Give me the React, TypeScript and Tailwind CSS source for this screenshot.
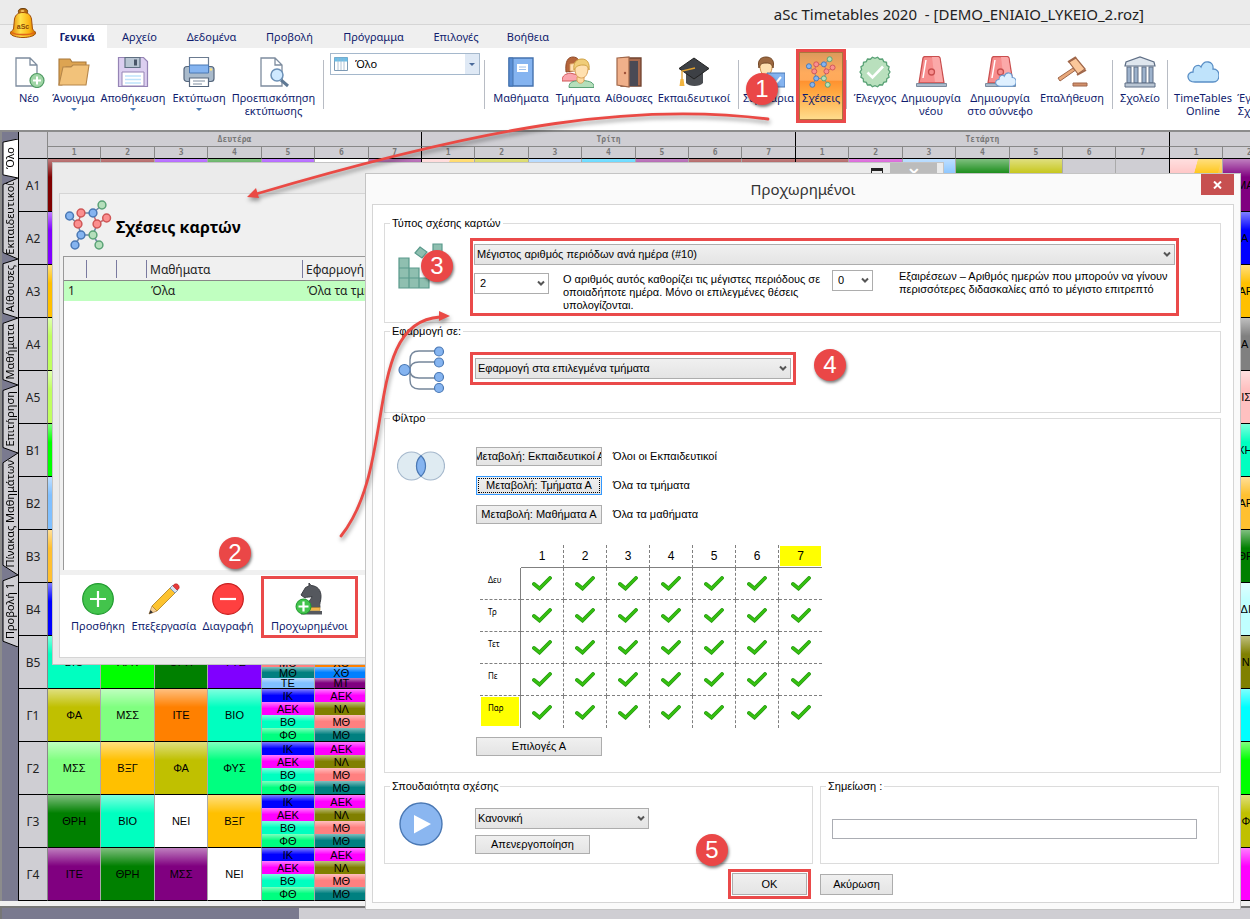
import React from "react";

type IconProps = { className?: string };

/* ---------- icons ---------- */

const moleculeLinks = [
  [28, 13, 37, 5], [4, 16, 13, 24], [16, 13, 28, 13], [16, 13, 13, 24], [28, 13, 32, 24],
  [32, 24, 42, 18], [13, 24, 16, 35], [32, 24, 28, 35], [16, 35, 28, 35], [16, 35, 10, 45], [28, 35, 34, 45],
];
const moleculeAtoms: [number, number, string, string][] = [
  [37, 5, "#b5dfbb", "#5aa276"], [4.6, 16, "#85b4f0", "#4a78b4"], [16, 13, "#fb8f8f", "#cf5757"],
  [28, 13, "#85b4f0", "#4a78b4"], [41.6, 18, "#fb8f8f", "#cf5757"], [13, 24, "#fb8f8f", "#cf5757"],
  [32, 24, "#fb8f8f", "#cf5757"], [16, 35, "#85b4f0", "#4a78b4"], [28, 35, "#b5dfbb", "#5aa276"],
  [10, 45, "#85b4f0", "#4a78b4"], [34, 45, "#b5dfbb", "#5aa276"],
];

const Molecule = ({ className }: IconProps) => (
  <svg viewBox="0 0 47 50" className={className} fill="none">
    {moleculeLinks.map(([a, b, c, d], i) => (
      <line key={i} x1={a} y1={b} x2={c} y2={d} stroke={i === 3 || i === 4 || i === 5 ? "#c46a70" : "#6d86a6"} strokeWidth="1.5" />
    ))}
    {moleculeAtoms.map(([x, y, f, s], i) => (
      <circle key={i} cx={x} cy={y} r="3.9" fill={f} stroke={s} strokeWidth="1.5" />
    ))}
  </svg>
);

const Bell = ({ className }: IconProps) => (
  <svg viewBox="0 0 26 30" className={className}>
    <defs>
      <linearGradient id="bell" x1="0" x2="1">
        <stop offset="0" stopColor="#e07a00" />
        <stop offset=".4" stopColor="#ffe24a" />
        <stop offset=".75" stopColor="#fdb515" />
        <stop offset="1" stopColor="#c96a00" />
      </linearGradient>
    </defs>
    <ellipse cx="13" cy="3.500" rx="4.600" ry="3" fill="#b56a10" stroke="#6b3c08" />
    <ellipse cx="12.500" cy="3" rx="2" ry="1" fill="#f5c060" />
    <path d="M4.500 11C5.500 6 9 4.500 13 4.500s7.500 1.500 8.500 6.500l1 10c1 2 3 2 3 4 0 3-7 4.500-12.500 4.500S.5 28 .5 25c0-2 2-2 3-4z" fill="url(#bell)" stroke="#a34f08" />
    <path d="M2 24.500c3 2.800 19 2.800 22 0" fill="none" stroke="#e0661a" strokeWidth="1.600" />
    <text x="13" y="21" fontSize="7" fontWeight="bold" textAnchor="middle" fill="#8a4a08" fontFamily="Liberation Sans, sans-serif">aSc</text>
  </svg>
);

const PageShape = () => <path d="M3 2h14l7 7v21H3z M17 2v7h7" fill="#fff" stroke="#7d8c9e" strokeWidth="1.300" />;

const NewIcon = ({ className }: IconProps) => (
  <svg viewBox="0 0 32 32" className={className}>
    <PageShape />
    <circle cx="24" cy="24.500" r="7" fill="#9fd5a5" stroke="#4f9a63" strokeWidth="1.200" />
    <path d="M24 20.500v8M20 24.500h8" stroke="#fff" strokeWidth="2" />
  </svg>
);
const OpenIcon = ({ className }: IconProps) => (
  <svg viewBox="0 0 32 32" className={className}>
    <path d="M1 29V3h11l2 3h14v5H8L4 29z" fill="#dda452" stroke="#a9783a" strokeWidth="1.100" />
    <path d="M5 11h8l2-2h16l-3 20H1z" fill="#f2c27a" stroke="#b5864a" strokeWidth="1.100" />
  </svg>
);
const SaveIcon = ({ className }: IconProps) => (
  <svg viewBox="0 0 32 32" className={className}>
    <path d="M1.500 1.500h25l4 4v25h-29z" fill="#dccff0" stroke="#9584b5" strokeWidth="1.200" />
    <path d="M8 1.500h15v10H8z" fill="#b9c5d3" stroke="#5f6f82" strokeWidth="1.200" />
    <path d="M17 3.500h3v6h-3z" fill="#4a5668" />
    <path d="M5 16h22v14H5z" fill="#fff" stroke="#9584b5" />
    <path d="M8 20h16M8 23.500h16M8 27h16" stroke="#bfe3fb" strokeWidth="1.500" />
  </svg>
);
const PrintIcon = ({ className }: IconProps) => (
  <svg viewBox="0 0 32 32" className={className}>
    <path d="M6.500 1.500h19v10h-19z" fill="#fff" stroke="#6b7b90" strokeWidth="1.200" />
    <rect x="1" y="10.500" width="30" height="15" rx="3" fill="#a9bacb" stroke="#56677d" strokeWidth="1.200" />
    <path d="M6.500 9h19v8h-19z" fill="#85b4f0" stroke="#4a78b4" />
    <path d="M6.500 22h19v8.500h-19z" fill="#fff" stroke="#56677d" strokeWidth="1.200" />
    <path d="M10 25h12M10 28h9" stroke="#7d8c9e" />
    <circle cx="28" cy="13.500" r="1.200" fill="#ffe27a" />
  </svg>
);
const PreviewIcon = ({ className }: IconProps) => (
  <svg viewBox="0 0 32 32" className={className}>
    <PageShape />
    <path d="M23 24l7 6" stroke="#5f7994" strokeWidth="3" />
    <circle cx="19" cy="19" r="6" fill="#cfe9ff" stroke="#6b8fb5" strokeWidth="1.500" />
  </svg>
);
const BookIcon = ({ className }: IconProps) => (
  <svg viewBox="0 0 32 32" className={className}>
    <path d="M4 2h24v28H4z" fill="#85b4f0" stroke="#4472ae" strokeWidth="1.400" />
    <path d="M4 2h4v28H4z" fill="#5a8fd6" stroke="#4472ae" />
    <path d="M12 8h11v8H12z" fill="#fff" />
    <path d="M14 11h7M14 13.500h7" stroke="#9fc0ea" />
  </svg>
);
const PeopleIcon = ({ className }: IconProps) => (
  <svg viewBox="0 0 32 32" className={className}>
    <path d="M4 16C3 5 6 1 11 1s8 4 7 13z" fill="#b5653a" stroke="#8f4a28" />
    <path d="M8 8c3 0 6-1 7-3v10H8z" fill="#ffe0b5" stroke="#d9a05a" strokeWidth=".800" />
    <path d="M0 25c0-6 4-7 8-8l8 2v6z" fill="#fba5ad" stroke="#cf5757" />
    <path d="M7 31.500c0-6 4-6 9-7h6c5 1 10 1 10 7z" fill="#b5dfbb" stroke="#5aa276" />
    <path d="M15 21h7v4c-2 3-5 3-7 0z" fill="#ffd9a0" stroke="#d9a05a" />
    <path d="M13 13c0-6 2-9 7-9 4 0 7 3 6 9-.500 6-3 9-6.500 9S13 19 13 13z" fill="#ffe0b0" stroke="#d9a05a" />
    <path d="M12 14c-1-7 2-11 8-11 5 0 8 4 7 11-1-4-3-5-6-5-4 0-7 1-9 5z" fill="#f0cd78" stroke="#cfa245" />
  </svg>
);
const DoorIcon = ({ className }: IconProps) => (
  <svg viewBox="0 0 32 32" className={className}>
    <path d="M8 2h20v28H8z" fill="#a86a4f" stroke="#70432f" strokeWidth="1.300" />
    <path d="M14 5h11v25H14z" fill="#4a4a55" />
    <path d="M4 2l12-1v30L4 29z" fill="#f0b08a" stroke="#a0674a" strokeWidth="1.200" />
    <circle cx="12" cy="17" r="1.200" fill="#a0523a" />
  </svg>
);
const CapIcon = ({ className }: IconProps) => (
  <svg viewBox="0 0 32 32" className={className}>
    <path d="M8 16v11c3 4 14 4 17 0V16z" fill="#4a4d52" />
    <path d="M16 2l15 10.500L16 23 1 12.500z" fill="#3d4045" stroke="#222" />
    <path d="M17 12L4 15v10" fill="none" stroke="#e0a030" strokeWidth="1.300" />
    <path d="M2.500 23h3l1 7h-5z" fill="#f2b540" />
  </svg>
);
const SeminarIcon = ({ className }: IconProps) => (
  <svg viewBox="0 0 32 32" className={className}>
    <path d="M1 31c0-8 4-9 9-10h6c4 1 8 2 8 10z" fill="#b5dfbb" stroke="#5aa276" />
    <path d="M7 10c0-5 2-8 6-8s7 3 6 9c0 5-3 9-6 9s-6-4-6-10z" fill="#ffe0b0" stroke="#c98f4a" />
    <path d="M6 12C4 4 8 1 13 1s9 3 7 11c-1-4-3-5-7-5s-6 1-7 5z" fill="#9c6840" stroke="#744826" />
    <path d="M14 17h18v14H14z" fill="#85b4f0" stroke="#4a78b4" />
    <path d="M20 24l3 3 5-6" fill="none" stroke="#fff" strokeWidth="2" />
  </svg>
);
const SealIcon = ({ className }: IconProps) => {
  const pts = Array.from({ length: 36 }, (_, i) => {
    const r = i % 2 ? 13.6 : 15;
    const a = (i * Math.PI) / 18;
    return `${16 + r * Math.cos(a)},${16 + r * Math.sin(a)}`;
  }).join(" ");
  return (
    <svg viewBox="0 0 32 32" className={className}>
      <polygon points={pts} fill="#b9e0bd" stroke="#5aa276" strokeWidth="1.300" />
      <path d="M8.500 16.500l5 5L24 10.500" fill="none" stroke="#fff" strokeWidth="2.600" />
    </svg>
  );
};
const SirenBody = () => (
  <>
    <path d="M8 2q.500-1.500 2-1.500h13q1.500 0 2 1.500l4 25H4z" fill="#f78e8e" stroke="#c94f4f" strokeWidth="1.300" />
    <path d="M17 1h6q1 0 1.500 1.500L28 26h-8z" fill="#fba9a9" />
    <path d="M11 4l-3 18" stroke="#fff" strokeWidth="1.500" />
    <circle cx="16.500" cy="16" r="3" fill="none" stroke="#c94f4f" strokeWidth="1.300" />
    <path d="M1.500 27.500h30v3h-30z" fill="#a9bacb" stroke="#7d8c9e" />
  </>
);
const SirenIcon = ({ className }: IconProps) => (
  <svg viewBox="0 0 32 32" className={className}><SirenBody /></svg>
);
const cloudPath = "M8 26c-9 0-9-10-2-10C6 9 12 8 14 11c3-8 13-6 12 2 8 0 8 13 0 13z";
const SirenCloudIcon = ({ className }: IconProps) => (
  <svg viewBox="0 0 32 32" className={className}>
    <SirenBody />
    <g transform="translate(11 13) scale(.66)"><path d={cloudPath} fill="#dff0ff" stroke="#6b9bd0" strokeWidth="1.600" /></g>
  </svg>
);
const CloudIcon = ({ className }: IconProps) => (
  <svg viewBox="0 0 32 32" className={className}><path d={cloudPath} fill="#bfe3fb" stroke="#5a8fc6" strokeWidth="1.300" /></svg>
);
const GavelIcon = ({ className }: IconProps) => (
  <svg viewBox="0 0 32 32" className={className}>
    <path d="M2 22L17 12l2 2.500L4 25z" fill="#e8a87a" stroke="#a0674a" />
    <path d="M13 6l7-4 9 11-7 5z" fill="#fbc79a" stroke="#a0674a" strokeWidth="1.200" />
    <path d="M12 6l8-5M21 19l9-5" stroke="#a0674a" strokeWidth="2" />
    <path d="M17 27h14v3H17z" fill="#d18f6a" stroke="#a0674a" />
  </svg>
);
const BankIcon = ({ className }: IconProps) => (
  <svg viewBox="0 0 32 32" className={className}>
    <path d="M1 10l1-4 14-5 14 5 1 4z" fill="#dfe6ee" stroke="#5f6f86" strokeWidth="1.200" />
    {[3, 10, 18, 25].map((x) => (
      <rect key={x} x={x} y="11" width="4" height="16" fill="#9db2cc" stroke="#5f6f86" />
    ))}
    <path d="M1 27h30v4H1z" fill="#b9c5d3" stroke="#5f6f86" />
  </svg>
);
const AddIcon = ({ className }: IconProps) => (
  <svg viewBox="0 0 32 32" className={className}>
    <circle cx="16" cy="16" r="15.300" fill="#43c44c" stroke="#1f9a2e" strokeWidth="1.200" />
    <path d="M16 8v16M8 16h16" stroke="#fff" strokeWidth="2.200" />
  </svg>
);
const RemoveIcon = ({ className }: IconProps) => (
  <svg viewBox="0 0 32 32" className={className}>
    <circle cx="16" cy="16" r="15.300" fill="#ff4040" stroke="#c81e1e" strokeWidth="1.200" />
    <path d="M8 16h16" stroke="#fff" strokeWidth="2.200" />
  </svg>
);
const PencilIcon = ({ className }: IconProps) => (
  <svg viewBox="0 0 32 32" className={className}>
    <path d="M1 31l3-8 5 5z" fill="#f5cf95" stroke="#b5864a" strokeWidth=".800" />
    <path d="M1 31l1.500-4 2.500 2.500z" fill="#333" />
    <path d="M4 23L22 5l5 5L9 28z" fill="#fdc32f" stroke="#b58a2a" strokeWidth=".900" />
    <path d="M22 5l3-3 5 5-3 3z" fill="#d5e3f0" stroke="#7890aa" strokeWidth=".900" />
    <path d="M26 1.500c3-2 6 1 5 4l-2 1.500-4-4z" fill="#e83a3a" stroke="#b02020" strokeWidth=".600" />
  </svg>
);
const KnightIcon = ({ className }: IconProps) => (
  <svg viewBox="0 0 32 32" className={className}>
    <path d="M15 0l2 2.500c7 .5 10 5 10 11 0 5-2 7-1 11H12c0-5 5-7 6-11-3 1-5 0-7 1.500l-4-3 4.500-7.500L15 3z" fill="#55585e" stroke="#3a3d42" />
    <path d="M11 24.500h15v3H11z" fill="#f5b54a" stroke="#b58a2a" strokeWidth=".600" />
    <path d="M7 28h21v3.500H7z" fill="#55585e" />
    <circle cx="9.500" cy="23.500" r="7.500" fill="#43c44c" stroke="#1f9a2e" />
    <path d="M9.500 18.500v10M4.500 23.500h10" stroke="#fff" strokeWidth="2.200" />
  </svg>
);
const BlocksIcon = ({ className }: IconProps) => (
  <svg viewBox="0 0 48 48" className={className} fill="#8fbfb0" stroke="#5a9a8c" strokeWidth="1.200">
    <path d="M1 15h10v10H1zM1 25h10v10H1zM11 25h10v10H11zM1 35h10v10H1zM11 35h10v10H11zM21 35h10v10H21zM35 1h9v9h-9z" />
    <path d="M22 4l7 5-5 6-7-5z" />
  </svg>
);
const TreeIcon = ({ className }: IconProps) => (
  <svg viewBox="0 0 48 48" className={className} fill="none" stroke="#75869b" strokeWidth="1.400">
    <path d="M41 5H21q-9 0-9 9v20q0 9 9 9h20M41 16H21q-9 0-9 8 0 8 9 8h20" />
    <g fill="#85b4f0" stroke="#4a78b4" strokeWidth="1.200">
      <circle cx="6.500" cy="24" r="5.500" />
      <circle cx="41" cy="5.500" r="4.500" /><circle cx="41" cy="16.500" r="4.500" />
      <circle cx="41" cy="31" r="4.500" /><circle cx="41" cy="42" r="4.500" />
    </g>
  </svg>
);
const VennIcon = ({ className }: IconProps) => (
  <svg viewBox="0 0 48 30" className={className} strokeWidth="1.200">
    <circle cx="14.500" cy="15" r="14" fill="#dfebf2" stroke="#a5b8cc" />
    <circle cx="33.500" cy="15" r="14" fill="#dfebf2" stroke="#a5b8cc" />
    <path d="M24 4.700a14 14 0 0 1 0 20.600a14 14 0 0 1 0-20.600z" fill="#85b4f0" stroke="#4a78b4" />
  </svg>
);
const PlayIcon = ({ className }: IconProps) => (
  <svg viewBox="0 0 44 44" className={className}>
    <circle cx="22" cy="22" r="21" fill="#8ab6f0" stroke="#4a78b4" strokeWidth="1.400" />
    <path d="M15 13l17 9-17 9.500z" fill="#fff" />
  </svg>
);
const Tick = () => (
  <svg viewBox="0 0 20 15" className="mx-auto h-[15px] w-5">
    <path d="M2 8l5.500 4.500L18 2" fill="none" stroke="#249a10" strokeWidth="3.800" strokeLinecap="round" />
    <path d="M2 8l5.500 4.500L18 2" fill="none" stroke="#36c010" strokeWidth="2.400" strokeLinecap="round" />
  </svg>
);

/* ---------- ribbon ---------- */

const Sep = ({ className = "" }: IconProps) => <span className={`mt-3 h-[49px] w-px shrink-0 bg-[#b8bcc4] ${className}`} />;

type RibbonProps = { icon?: (p: IconProps) => React.ReactElement; lines: string[]; w: string; drop?: boolean; active?: boolean };

const RibbonButton = ({ icon: Icon, lines, w, drop, active }: RibbonProps) => (
  <button
    className={`flex shrink-0 flex-col items-center text-[11px] leading-[13px] whitespace-nowrap text-[#0f1c6e] ${w} ${
      active
        ? "h-[68px] border border-[#a8783c] bg-[linear-gradient(#dc9a5c,#ffab5c_30%,#ffa95a_41%,#ff9230_43%,#ffa840_60%,#ffdc8c)] pt-[3px]"
        : "h-[82px] pt-[8px]"
    }`}
  >
    {Icon ? <Icon className="h-8 w-8 shrink-0" /> : <span className="h-8" />}
    <span className="mt-[3px] text-center">
      {lines.map((l) => (
        <span key={l} className="block">{l}</span>
      ))}
    </span>
    {drop && <span className="mt-[4px] border-x-[3px] border-t-[3px] border-x-transparent border-t-[#4a7ab5]" />}
  </button>
);

const menuTabs: [string, string][] = [
  ["Αρχείο", "w-[65px]"], ["Δεδομένα", "w-[79px]"], ["Προβολή", "w-[77px]"],
  ["Πρόγραμμα", "w-[91px]"], ["Επιλογές", "w-[74px]"], ["Βοήθεια", "w-[70px]"],
];

const Ribbon = () => (
  <div className="flex h-[82px] items-start overflow-hidden bg-white pl-[9px]">
    <RibbonButton icon={NewIcon} lines={["Νέο"]} w="w-10" />
    <RibbonButton icon={OpenIcon} lines={["Άνοιγμα"]} w="w-[49px]" drop />
    <RibbonButton icon={SaveIcon} lines={["Αποθήκευση"]} w="w-[70px]" drop />
    <RibbonButton icon={PrintIcon} lines={["Εκτύπωση"]} w="w-[62px]" drop />
    <RibbonButton icon={PreviewIcon} lines={["Προεπισκόπηση", "εκτύπωσης"]} w="w-[87px]" />
    <Sep className="mx-[6px]" />
    <div className="relative mt-[5px] w-[150px] shrink-0">
      <svg viewBox="0 0 14 14" className="absolute top-1 left-1 h-3.5 w-3.5">
        <path d="M.5.5h13v13H.5z" fill="#fff" stroke="#7d9ab5" />
        <path d="M.5.5h13v4H.5z" fill="#6bbfe8" />
        <path d="M4 1v12M7 1v12M10 1v12" stroke="#9fb5cc" strokeWidth=".800" />
      </svg>
      <select aria-label="Προβολή" className="block h-[22px] w-full appearance-none border border-[#a5b8cc] bg-transparent pl-6 text-[11px]">
        <option>Όλο</option>
      </select>
      <span className="pointer-events-none absolute top-px right-px flex h-5 w-[14px] items-center justify-center bg-[#dfe9f5]">
        <span className="border-x-[3px] border-t-[3px] border-x-transparent border-t-[#4a6a9a]" />
      </span>
    </div>
    <Sep className="mr-[7px] ml-1" />
    <RibbonButton icon={BookIcon} lines={["Μαθήματα"]} w="w-[58px]" />
    <RibbonButton icon={PeopleIcon} lines={["Τμήματα"]} w="w-14" />
    <RibbonButton icon={DoorIcon} lines={["Αίθουσες"]} w="w-[46px]" />
    <RibbonButton icon={CapIcon} lines={["Εκπαιδευτικοί"]} w="w-[84px]" />
    <Sep className="mx-[2px]" />
    <RibbonButton icon={SeminarIcon} lines={["Σεμινάρια"]} w="w-[55px]" />
    <div className="mt-px h-[74px] shrink-0 border-[3px] border-[#ea4a4a]">
      <RibbonButton icon={Molecule} lines={["Σχέσεις"]} w="w-11" active />
    </div>
    <Sep className="mr-[2px]" />
    <RibbonButton icon={SealIcon} lines={["Έλεγχος"]} w="w-[52px]" />
    <RibbonButton icon={SirenIcon} lines={["Δημιουργία", "νέου"]} w="w-[60px]" />
    <RibbonButton icon={SirenCloudIcon} lines={["Δημιουργία", "στο σύννεφο"]} w="w-[78px]" />
    <RibbonButton icon={GavelIcon} lines={["Επαλήθευση"]} w="w-[66px]" />
    <Sep className="mr-px ml-[7px]" />
    <RibbonButton icon={BankIcon} lines={["Σχολείο"]} w="w-[52px]" />
    <Sep className="ml-px" />
    <RibbonButton icon={CloudIcon} lines={["TimeTables", "Online"]} w="w-[70px]" />
    <RibbonButton lines={["Έγγραφα", "Σχολείου"]} w="w-[46px]" />
  </div>
);

/* ---------- timetable ---------- */

type Card = { t?: string; c: string };
type Slot = Card | Card[];

const maroon = "bg-[#800000]", violet = "bg-[#8000ff]", amber = "bg-[#ffc000]", lime = "bg-[#c0ff60]";
const green = "bg-[#00ff00]", sky = "bg-[#80c0ff]", blue = "bg-[#0000ff]", aqua = "bg-[#00ffc0]";
const forest = "bg-[#008000]", purple = "bg-[#800080]", mustard = "bg-[#c0c000]", mint = "bg-[#80ff80]";
const orange = "bg-[#ff8000]", spring = "bg-[#00ff80]", magenta = "bg-[#ff00ff]", olive = "bg-[#808000]";
const salmon = "bg-[#ff8080]", teal = "bg-[#008080]", white = "bg-white", rose = "bg-[#ffc0c0]", cyan = "bg-[#00ffff]";
const azure = "bg-[#0080ff]", gray = "bg-[#808080]", ice = "bg-[#c0ffff]", gold = "bg-[#ffc030]", orchid = "bg-[#c000c0]";

const groupA: Card[] = [{ t: "ΙΚ", c: blue }, { t: "ΑΕΚ", c: magenta }, { t: "ΒΘ", c: aqua }, { t: "ΦΘ", c: spring }];
const groupB: Card[] = [{ t: "ΑΕΚ", c: magenta }, { t: "ΝΛ", c: olive }, { t: "ΜΘ", c: salmon }, { t: "ΜΘ", c: teal }];

const rows: { name: string; slots: Record<number, Slot> }[] = [
  {
    name: "Α1",
    slots: {
      0: { c: maroon }, 1: { c: maroon }, 2: { c: violet }, 3: { c: forest }, 4: { c: violet }, 5: { c: white }, 6: { c: purple },
      7: { c: "bg-[linear-gradient(105deg,#ffc0c0_42%,#ffc000_43%,#ffc000_78%,#ffc030_79%)]" },
      8: { c: mustard }, 9: { c: sky }, 10: { c: "bg-[#00c0ff]" }, 11: { c: purple }, 12: { c: maroon }, 13: { c: maroon },
      14: { c: maroon }, 15: { c: orchid }, 16: { c: sky }, 17: { c: forest }, 18: { c: mustard },
      21: { c: "bg-[linear-gradient(105deg,#ffc0c0_42%,#ffc000_43%,#ffc000_78%,#ffc030_79%)]" }, 22: { t: "ΜΑΘ", c: purple },
    },
  },
  { name: "Α2", slots: { 0: { c: violet }, 22: { t: "Α Ε", c: blue } } },
  { name: "Α3", slots: { 0: { c: amber }, 22: { t: "ΑΡΧ", c: amber } } },
  { name: "Α4", slots: { 0: { c: lime }, 22: { t: "Α Ε", c: gray } } },
  { name: "Α5", slots: { 0: { c: lime }, 22: { t: "ΙΣΤ", c: rose } } },
  { name: "Β1", slots: { 0: { c: green }, 22: { t: "ΧΗΜ", c: aqua } } },
  { name: "Β2", slots: { 0: { c: sky }, 22: { t: "ΑΡΧ", c: gold } } },
  { name: "Β3", slots: { 0: { c: gold }, 22: { t: "ΘΡΗ", c: forest } } },
  { name: "Β4", slots: { 0: { c: blue }, 22: { t: "ΔΙΕ", c: ice } } },
  {
    name: "Β5",
    slots: {
      0: { t: "ΒΙΟ", c: aqua }, 1: { t: "ΑΓΚ", c: green }, 2: { t: "ΘΡΗ", c: forest }, 3: { t: "ΦΥΣ", c: violet },
      4: [{ c: blue }, { c: magenta }, { t: "ΜΘ", c: salmon }, { t: "ΜΘ", c: teal }, { t: "ΤΕ", c: sky }],
      5: [{ c: blue }, { c: magenta }, { t: "ΧΘ", c: orange }, { t: "ΧΘ", c: azure }, { t: "ΜΤ", c: purple }],
      22: { t: "ΝΛ", c: olive },
    },
  },
  {
    name: "Γ1",
    slots: { 0: { t: "ΦΑ", c: mustard }, 1: { t: "ΜΣΣ", c: mint }, 2: { t: "ΙΤΕ", c: orange }, 3: { t: "ΒΙΟ", c: aqua }, 4: groupA, 5: groupB, 22: { c: cyan } },
  },
  {
    name: "Γ2",
    slots: { 0: { t: "ΜΣΣ", c: mint }, 1: { t: "ΒΞΓ", c: amber }, 2: { t: "ΦΑ", c: mustard }, 3: { t: "ΦΥΣ", c: spring }, 4: groupA, 5: groupB, 22: { c: green } },
  },
  {
    name: "Γ3",
    slots: { 0: { t: "ΘΡΗ", c: forest }, 1: { t: "ΒΙΟ", c: aqua }, 2: { t: "ΝΕΙ", c: white }, 3: { t: "ΒΞΓ", c: amber }, 4: groupA, 5: groupB, 22: { t: "ΦΑ", c: mustard } },
  },
  {
    name: "Γ4",
    slots: { 0: { t: "ΙΤΕ", c: purple }, 1: { t: "ΘΡΗ", c: forest }, 2: { t: "ΜΣΣ", c: purple }, 3: { t: "ΝΕΙ", c: white }, 4: groupA, 5: groupB, 22: { c: magenta } },
  },
];

const CardCell = ({ card, small }: { card: Card; small?: boolean }) => (
  <div className={`min-h-0 flex-1 ${card.c}`}>
    <div
      className={`flex h-full items-center justify-center overflow-hidden bg-linear-to-b from-white/50 to-transparent pt-px text-[11px] ${
        small ? "to-50% leading-[10px]" : "to-35%"
      }`}
    >
      {card.t}
    </div>
  </div>
);

const SlotView = ({ slot }: { slot?: Slot }) => (
  <div className="flex h-[52px] flex-col">
    {Array.isArray(slot)
      ? slot.map((c, i) => <CardCell key={i} card={c} small />)
      : slot && <CardCell card={slot} />}
  </div>
);

const Timetable = () => (
  <table className="w-[1525px] table-fixed border-separate border-spacing-0 bg-[#cfced3] font-['Liberation_Sans',sans-serif]">
    <colgroup>
      <col className="w-[29px]" />
      {Array.from({ length: 28 }, (_, i) => <col key={i} />)}
    </colgroup>
    <thead className="font-['DejaVu_Sans_Mono',monospace] text-[8px] leading-[10px] text-[#777]">
      <tr className="h-[15px]">
        <th rowSpan={2} className="border-r border-b border-r-[#888] border-b-black p-0" />
        {["Δευτέρα", "Τρίτη", "Τετάρτη", "Πέμπτη"].map((d) => (
          <th key={d} colSpan={7} className="border-r border-b border-r-black border-b-[#888] p-0 pt-px">{d}</th>
        ))}
      </tr>
      <tr className="h-3">
        {Array.from({ length: 28 }, (_, i) => (
          <th key={i} className={`border-r border-b border-b-black p-0 ${i % 7 === 6 ? "border-r-black" : "border-r-[#888]"}`}>
            {(i % 7) + 1}
          </th>
        ))}
      </tr>
    </thead>
    <tbody>
      {rows.map((r) => (
        <tr key={r.name}>
          <th className="border-r border-b border-r-[#888] border-b-black p-0 pt-px font-['Noto_Sans',sans-serif] text-xs font-normal text-[#222]">
            {r.name}
          </th>
          {Array.from({ length: 28 }, (_, i) => (
            <td key={i} className={`border-r border-b border-b-black p-0 ${i % 7 === 6 ? "border-r-black" : "border-r-[#aaa]"}`}>
              <SlotView slot={r.slots[i]} />
            </td>
          ))}
        </tr>
      ))}
    </tbody>
  </table>
);

const sideTabs: [string, string][] = [
  ["Όλο", "h-[39px]"], ["Εκπαιδευτικοί", "h-[81px]"], ["Αίθουσες", "h-[59px]"], ["Μαθήματα", "h-[67px]"],
  ["Επιτήρηση", "h-[68px]"], ["Πίνακας Μαθημάτων", "h-[122px]"], ["Προβολή 1", "h-[72px]"],
];

const SideTabs = () => (
  <nav className="flex w-4 shrink-0 flex-col bg-[#7a7a8f] pt-[7px]">
    {sideTabs.map(([name, h], i) => (
      <button key={name} className={`relative flex w-4 items-center justify-center ${h}`}>
        <svg viewBox="0 0 16 100" preserveAspectRatio="none" className="absolute inset-0 h-full w-full">
          <path d="M16 0L1 8V92L16 100" fill={i === 0 ? "#fff" : "#cfced3"} stroke="#000" vectorEffect="non-scaling-stroke" />
        </svg>
        <span className="relative rotate-180 text-[11px] leading-4 whitespace-nowrap [writing-mode:vertical-rl]">{name}</span>
      </button>
    ))}
  </nav>
);

/* ---------- form parts ---------- */

const Drop = ({ label, value, className, plain }: { label: string; value: string; className: string; plain?: boolean }) => (
  <div className={`relative h-[21px] shrink-0 ${className}`}>
    <select
      aria-label={label}
      className={`block h-full w-full appearance-none border border-[#adadad] ${
        plain ? "bg-white pl-[5px]" : "bg-linear-to-b from-[#f0f0f0] to-[#e4e4e4] pl-[2px]"
      }`}
    >
      <option>{value}</option>
    </select>
    <svg viewBox="0 0 8 7" className="pointer-events-none absolute top-[7px] right-1 h-[7px] w-2">
      <path d="M1 1.500l3 3 3-3" fill="none" stroke="#555" strokeWidth="2" />
    </svg>
  </div>
);

const PushButton = ({ children, className = "" }: { children: React.ReactNode; className?: string }) => (
  <button
    className={`flex items-center justify-center overflow-hidden border bg-linear-to-b from-[#f0f0f0] to-[#e4e4e4] whitespace-nowrap ${
      className.includes("outline") ? "" : "border-[#adadad]"
    } ${className}`}
  >
    {children}
  </button>
);

const Group = ({ title, className = "", children }: { title: string; className?: string; children: React.ReactNode }) => (
  <fieldset className={`min-w-0 border border-[#dcdcdc] ${className}`}>
    <legend className="ml-[5px] px-[2px] leading-[10px]">{title}</legend>
    {children}
  </fieldset>
);

const days = ["Δευ", "Τρ", "Τετ", "Πε", "Παρ"];

const PeriodGrid = () => (
  <table className="mt-[21px] ml-1 w-[342px] table-fixed border-separate border-spacing-0">
    <colgroup>
      <col className="w-[41px]" />
      {days.concat("", "").map((_, i) => <col key={i} className="w-[43px]" />)}
    </colgroup>
    <thead>
      <tr>
        <th className="h-[23px] p-0" />
        {[1, 2, 3, 4, 5, 6, 7].map((n) => (
          <th
            key={n}
            className={`h-[23px] border-b border-b-[#808080] p-px text-xs font-normal ${
              n < 7 ? "border-r border-dashed border-r-[#808080] [border-bottom-style:solid]" : ""
            }`}
          >
            <div className={n === 7 ? "h-5 bg-[#ffff00] leading-5" : "h-5 leading-5"}>{n}</div>
          </th>
        ))}
      </tr>
    </thead>
    <tbody>
      {days.map((d, r) => (
        <tr key={d}>
          <th
            className={`h-8 border-r border-r-[#808080] p-px text-left align-top font-['Noto_Sans',sans-serif] text-[8px] font-normal ${
              r < 4 ? "border-b border-dashed border-b-[#808080] [border-right-style:solid]" : ""
            }`}
          >
            <div className={`h-[29px] pt-1.5 pl-[7px] leading-[10px] ${r === 4 ? "bg-[#ffff00]" : ""}`}>{d}</div>
          </th>
          {[1, 2, 3, 4, 5, 6, 7].map((n) => (
            <td key={n} className={`h-8 border-dashed border-[#808080] p-0 ${n < 7 ? "border-r" : ""} ${r < 4 ? "border-b" : ""}`}>
              <Tick />
            </td>
          ))}
        </tr>
      ))}
    </tbody>
  </table>
);

/* ---------- windows ---------- */

const ToolButton = ({ icon: Icon, label, w }: { icon: (p: IconProps) => React.ReactElement; label: string; w: string }) => (
  <button className={`flex flex-col items-center text-[11px] leading-4 whitespace-nowrap text-[#0f1c6e] ${w}`}>
    <Icon className="h-8 w-8" />
    <span className="mt-[3px]">{label}</span>
  </button>
);

const RelationsWindow = () => (
  <section className="absolute top-[162px] left-[52px] w-[892px] border border-[#c4c4c4] bg-[#ebebeb] px-[6px] pb-[6px]">
    <header className="relative h-[30px]">
      <h2 className="text-center text-[15px] leading-8">Σχέσεις καρτών</h2>
      <span className="absolute top-[5px] right-[54px] h-3 w-3 border border-t-[3px] border-[#222]" />
      <button aria-label="Κλείσιμο" className="absolute top-0 right-0 h-5 w-[47px] bg-[#bcbcbc] text-sm leading-5 font-bold text-white">✕</button>
    </header>
    <div className="border border-[#d5d5d5] bg-[#f0f0f0]">
      <div className="flex h-[62px] items-center gap-1 pl-[5px]">
        <Molecule className="h-[50px] w-[47px]" />
        <h1 className="mt-1 text-base font-bold">Σχέσεις καρτών</h1>
      </div>
      <div className="ml-[3px] h-[314px] border-t border-l border-[#999] bg-white">
        <table className="w-full table-fixed border-separate border-spacing-0 text-left text-xs text-[#222]">
          <colgroup>
            <col className="w-[23px]" />
            <col className="w-[30px]" />
            <col className="w-[30px]" />
            <col className="w-[156px]" />
            <col />
          </colgroup>
          <thead>
            <tr className="bg-[#f0f0f0]">
              {["", "", "", "Μαθήματα", "Εφαρμογή"].map((t, i) => (
                <th key={i} className="h-6 border-b border-[#888] p-0 font-normal">
                  <div className={`h-[18px] pl-[3px] leading-[19px] ${i < 4 ? "border-r border-[#7a7aa0]" : ""}`}>{t}</div>
                </th>
              ))}
            </tr>
          </thead>
          <tbody>
            <tr className="bg-[#c0ffc0]">
              {["1", "", "", "Όλα", "Όλα τα τμήματα"].map((t, i) => (
                <td key={i} className="h-5 p-0 pl-1 leading-5">{t}</td>
              ))}
            </tr>
          </tbody>
        </table>
      </div>
      <div className="mt-[5px] flex h-[82px] items-start bg-white pt-px pl-[5px]">
        <div className="flex pt-[7px]">
          <ToolButton icon={AddIcon} label="Προσθήκη" w="w-[66px]" />
          <ToolButton icon={PencilIcon} label="Επεξεργασία" w="w-[66px]" />
          <ToolButton icon={RemoveIcon} label="Διαγραφή" w="w-[62px]" />
        </div>
        <div className="ml-[2px] border-[3px] border-[#ea4a4a] pt-1 pb-px">
          <ToolButton icon={KnightIcon} label="Προχωρημένοι" w="w-[91px]" />
        </div>
      </div>
    </div>
  </section>
);

const filters: [string, string, string][] = [
  ["Μεταβολή: Εκπαιδευτικοί Α", "Όλοι οι Εκπαιδευτικοί", ""],
  ["Μεταβολή: Τμήματα Α", "Όλα τα τμήματα", "border-[#3399ff] outline outline-1 outline-dotted outline-black -outline-offset-3"],
  ["Μεταβολή: Μαθήματα Α", "Όλα τα μαθήματα", ""],
];

const AdvancedDialog = () => (
  <section
    role="dialog"
    aria-label="Προχωρημένοι"
    className="absolute top-[173px] right-[9px] left-[365px] border border-[#c4c4c4] bg-[#fafafa] px-[6px] pb-[6px]"
  >
    <header className="relative h-[30px]">
      <h2 className="text-center text-[15px] leading-[30px] text-[#333]">Προχωρημένοι</h2>
      <button aria-label="Κλείσιμο" className="absolute top-0 right-0 flex h-[21px] w-[33px] items-center justify-center bg-[#c75050]">
        <svg viewBox="0 0 9 8" className="h-2 w-[9px]"><path d="M1 .5l7 7M8 .5l-7 7" stroke="#fff" strokeWidth="2" /></svg>
      </button>
    </header>
    <div className="border border-[#d5d5d5] bg-white pt-[13px] pr-3 pb-[3px] pl-[11px] font-['Liberation_Sans',sans-serif] text-[11px] leading-[13px]">
      <Group title="Τύπος σχέσης καρτών" className="h-[105px]">
        <div className="mt-[10px] flex items-start pr-[41px] pl-[13px]">
          <BlocksIcon className="mt-[5px] h-12 w-12 shrink-0" />
          <div className="ml-6 min-w-0 flex-1 border-[3px] border-[#ea4a4a] px-px pt-[3px] pb-px">
            <Drop label="Τύπος σχέσης" value="Μέγιστος αριθμός περιόδων ανά ημέρα (#10)" className="w-full" />
            <div className="mt-[5px] flex h-[42px] items-start">
              <Drop label="Μέγιστος αριθμός" value="2" className="mt-[3px] w-[75px]" plain />
              <p className="mt-[3px] ml-[14px] w-[260px] shrink-0">
                Ο αριθμός αυτός καθορίζει τις μέγιστες περιόδους σε οποιαδήποτε ημέρα. Μόνο οι επιλεγμένες θέσεις υπολογίζονται.
              </p>
              <Drop label="Εξαιρέσεις" value="0" className="ml-[9px] w-[41px]" plain />
              <p className="ml-[26px] min-w-0">
                Εξαιρέσεων – Αριθμός ημερών που μπορούν να γίνουν περισσότερες διδασκαλίες από το μέγιστο επιτρεπτό
              </p>
            </div>
          </div>
        </div>
      </Group>

      <Group title="Εφαρμογή σε:" className="mt-[3px] h-[87px]">
        <div className="mt-[10px] flex items-start pl-[13px]">
          <TreeIcon className="h-12 w-12" />
          <div className="mt-[6px] ml-6 border-[3px] border-[#ea4a4a] px-[2px] py-[3px]">
            <Drop label="Εφαρμογή σε" value="Εφαρμογή στα επιλεγμένα τμήματα" className="w-[316px]" />
          </div>
        </div>
      </Group>

      <Group title="Φίλτρο" className="h-[360px]">
        <div className="mt-6 flex items-start pl-3">
          <VennIcon className="mt-1 h-[30px] w-12" />
          <div className="ml-[31px]">
            <div className="flex flex-col gap-[10px]">
              {filters.map(([b, t, extra]) => (
                <div key={b} className="flex items-center gap-[11px]">
                  <PushButton className={`h-[19px] w-[126px] ${extra}`}>
                    <span>{b}</span>
                  </PushButton>
                  <span>{t}</span>
                </div>
              ))}
            </div>
            <PeriodGrid />
            <PushButton className="mt-[9px] h-[19px] w-[126px]">Επιλογές Α</PushButton>
          </div>
        </div>
      </Group>

      <div className="mt-[8px] flex gap-[7px]">
        <Group title="Σπουδαιότητα σχέσης" className="h-[83px] w-[429px] shrink-0">
          <div className="mt-[11px] flex items-start pl-[14px]">
            <PlayIcon className="h-11 w-11" />
            <div className="mt-[6px] ml-8">
              <Drop label="Σπουδαιότητα σχέσης" value="Κανονική" className="w-[174px]" />
              <PushButton className="mt-[6px] h-[19px] w-[115px]">Απενεργοποίηση</PushButton>
            </div>
          </div>
        </Group>
        <Group title="Σημείωση :" className="mr-[2px] h-[83px] flex-1">
          <input aria-label="Σημείωση" className="mt-[28px] ml-[11px] h-5 w-[calc(100%-32px)] border border-[#abadb3] px-1" />
        </Group>
      </div>

      <div className="mt-[5px] ml-[344px] flex items-center gap-[9px]">
        <div className="border-[3px] border-[#ea4a4a] px-px py-px">
          <PushButton className="h-[22px] w-[75px]">OK</PushButton>
        </div>
        <PushButton className="h-[21px] w-[73px]">Ακύρωση</PushButton>
      </div>
    </div>
  </section>
);

/* ---------- tutorial marks ---------- */

const badges: [number, string][] = [
  [1, "top-[73px] left-[746px]"],
  [2, "top-[537px] left-[219px]"],
  [3, "top-[250px] left-[421px]"],
  [4, "top-[349px] left-[814px]"],
  [5, "top-[834px] left-[696px]"],
];

const Marks = () => (
  <>
    <svg viewBox="0 0 800 560" className="pointer-events-none absolute top-0 left-0 h-[560px] w-[800px] drop-shadow-[1px_3px_2px_rgba(0,0,0,0.4)]">
      <g fill="none" stroke="#ea4a45" strokeWidth="2.800" strokeLinecap="round">
        <path d="M768 119C640 103 500 122 256 194" />
        <path d="M341 536C398 465 362 322 440 317" />
      </g>
      <path d="M247 197l9-9 3 10zM450 316l-11-5v10z" fill="#ea4a45" />
    </svg>
    {badges.map(([n, pos]) => (
      <span
        key={n}
        className={`absolute flex h-8 w-8 items-center justify-center rounded-full bg-[#ea4747] font-['Liberation_Sans',sans-serif] text-2xl leading-8 text-white shadow-[1px_2px_3px_rgba(0,0,0,0.5)] ${pos}`}
      >
        {n}
      </span>
    ))}
  </>
);

export default function App() {
  return (
    <div className="relative flex min-h-screen flex-col overflow-hidden bg-[#cfced3] font-['Noto_Sans',sans-serif] text-black">
      <header>
        <div className="flex h-[25px] items-center justify-end border-b border-[#d5d5d5] bg-[#ebebeb] pr-[106px]">
          <h1 className="mt-1 text-[15px] whitespace-pre text-[#222]">aSc Timetables 2020  - [DEMO_ENIAIO_LYKEIO_2.roz]</h1>
        </div>
        <Bell className="absolute top-2 left-[10px] h-[30px] w-[26px]" />
        <nav className="flex h-[23px] bg-[#efefef] pl-[47px] text-[11px] text-[#0f1c6e]">
          <button className="w-[60px] bg-white pt-[2px] font-bold">Γενικά</button>
          {menuTabs.map(([t, w]) => (
            <button key={t} className={`pt-[2px] ${w}`}>{t}</button>
          ))}
        </nav>
        <Ribbon />
      </header>
      <main className="flex border-t-2 border-l-2 border-[#8c8c8c]">
        <SideTabs />
        <div className="min-w-0 flex-1 overflow-hidden border-l border-black">
          <Timetable />
        </div>
      </main>
      <footer>
        <div className="h-[5px] bg-[#f0f0f0]" />
        <div className="flex h-[14px] border-t-2 border-l-2 border-[#777] bg-[#cfced3]">
          <div className="w-[297px] bg-[#7a7a8f]" />
        </div>
      </footer>
      <RelationsWindow />
      <AdvancedDialog />
      <Marks />
    </div>
  );
}
